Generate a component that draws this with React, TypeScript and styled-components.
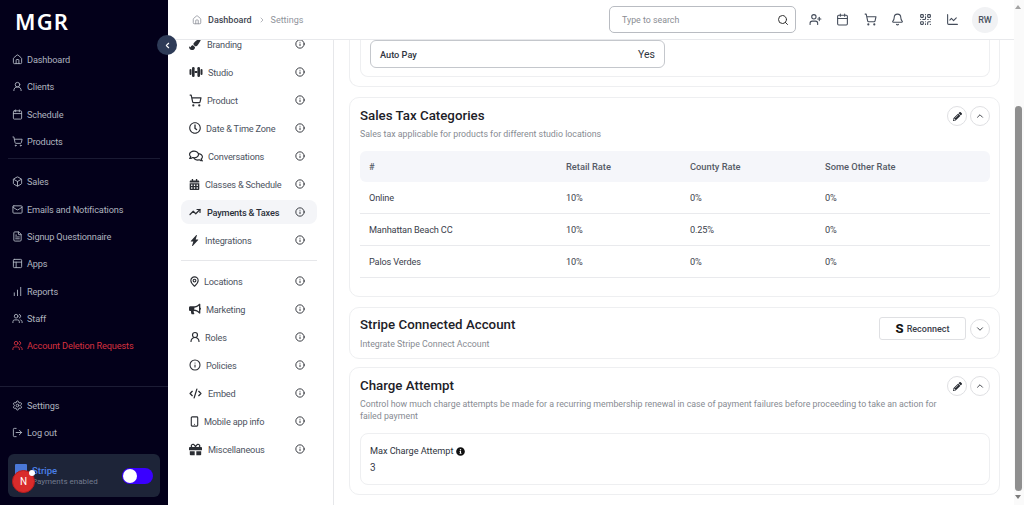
import type { ReactNode } from 'react';
import styled, { createGlobalStyle } from 'styled-components';
import {
  House, UserRound, Calendar, ShoppingCart, Box, Mail, FileText, PanelsTopLeft, Users, Settings, LogOut,
  ChevronLeft, ChevronRight, ChevronUp, ChevronDown, Search, UserPlus, Bell, QrCode, ChartLine, Info,
  TrendingUp, MapPin, CodeXml, Smartphone, ChartNoAxesColumnIncreasing,
} from 'lucide-react';
import {
  FaPaintBrush, FaCalendarAlt, FaBullhorn, FaPencilAlt, FaInfoCircle, FaGift, FaRegClock, FaRegComments,
} from 'react-icons/fa';
import { BsLightningChargeFill } from 'react-icons/bs';

const GlobalStyle = createGlobalStyle`
  html, body {
    margin: 0;
    height: 505px;
    overflow: hidden;
    font-family: Roboto, 'Noto Sans', sans-serif;
  }
  * { box-sizing: border-box; }
`;

const Shell = styled.div`
  position: relative;
  display: flex;
  width: 1024px;
  height: 505px;
  overflow: hidden;
  background: #fff;
`;

const Sidebar = styled.aside`
  width: 168px;
  flex: none;
  display: flex;
  flex-direction: column;
  background: #03001a;
  color: #b4b8c4;
`;

const Logo = styled.div`
  height: 46px;
  padding: 6px 0 0 15px;
  font-family: 'Noto Sans', sans-serif;
  font-size: 22px;
  line-height: 30px;
  font-weight: 600;
  letter-spacing: 1.2px;
  color: #fff;
`;

const SideGroup = styled.div`
  display: flex;
  flex-direction: column;
  padding: 0 8px;
`;

const SideItem = styled.div<{ $danger?: boolean }>`
  display: flex;
  align-items: center;
  gap: 4px;
  height: 27.3px;
  padding-left: 4px;
  font-size: 9.2px;
  letter-spacing: -0.15px;
  white-space: nowrap;
  color: ${({ $danger }) => ($danger ? '#d5303f' : '#aeb3bf')};
`;

const SideDivider = styled.div`
  height: 1px;
  margin: 3px 8px 9px;
  background: #1a1a33;
`;

const SideSpacer = styled.div`
  flex: 1;
`;

const SideRule = styled.div`
  height: 1px;
  margin-bottom: 4px;
  background: #1c1c35;
`;

const StripeCard = styled.div`
  display: flex;
  align-items: center;
  height: 43px;
  margin: 8px;
  padding: 0 7px;
  gap: 5px;
  border-radius: 6px;
  background: #1d2438;
`;

const StripeLogo = styled.div`
  width: 12px;
  height: 20px;
  margin-bottom: 4px;
  border-radius: 1px;
  background: #4a78d8;
`;

const StripeText = styled.div`
  flex: 1;
  font-size: 8px;
  line-height: 11px;
  color: #737b8e;

  strong {
    display: block;
    font-size: 9.5px;
    font-weight: 500;
    color: #4a7fe8;
  }
`;

const Toggle = styled.div`
  width: 31px;
  height: 16px;
  padding: 1px;
  border-radius: 8px;
  background: #3a00ff;

  &::before {
    content: '';
    display: block;
    width: 14px;
    height: 14px;
    border-radius: 50%;
    background: #fff;
  }
`;

const DevBadge = styled.div`
  position: absolute;
  left: 12px;
  top: 470px;
  width: 23px;
  height: 23px;
  display: flex;
  align-items: center;
  justify-content: center;
  border-radius: 50%;
  border: 1px solid #b81c1c;
  background: #d92b2b;
  color: #fff;
  font-size: 10px;

  &::after {
    content: '';
    position: absolute;
    right: -1px;
    top: -1px;
    width: 6px;
    height: 6px;
    border-radius: 50%;
    background: #fff;
  }
`;

const CollapseButton = styled.div`
  position: absolute;
  left: 157px;
  top: 35px;
  width: 20px;
  height: 20px;
  display: flex;
  align-items: center;
  justify-content: center;
  border-radius: 50%;
  background: #2e3b57;
  color: #fff;
`;

const Workspace = styled.div`
  flex: 1;
  min-width: 0;
  display: flex;
  flex-direction: column;
`;

const Header = styled.header`
  height: 40px;
  flex: none;
  display: flex;
  align-items: center;
  padding: 0 16px 0 24px;
  border-bottom: 1px solid #e8e9ec;
  background: #fff;
`;

const Crumbs = styled.div`
  flex: 1;
  display: flex;
  align-items: center;
  font-size: 9px;
  color: #8f939b;

  b {
    margin: 0 6px 0 6px;
    font-weight: 500;
    color: #3f4652;
  }

  span {
    margin-left: 5px;
  }
`;

const SearchBox = styled.div`
  width: 187px;
  height: 27px;
  display: flex;
  align-items: center;
  justify-content: space-between;
  padding: 0 6px 0 12px;
  border: 1px solid #b9bcc2;
  border-radius: 5px;
  font-size: 8.8px;
  color: #8a8d93;
`;

const HeaderIcons = styled.div`
  display: flex;
  align-items: center;
  gap: 14.4px;
  margin-left: 13px;
  color: #444c5a;
`;

const Avatar = styled.div`
  width: 26px;
  height: 26px;
  margin-left: 13px;
  display: flex;
  align-items: center;
  justify-content: center;
  border-radius: 50%;
  background: #f1f2f4;
  color: #4a5260;
  font-size: 9px;
  font-weight: 500;
`;

const Body = styled.div`
  flex: 1;
  min-height: 0;
  display: flex;
`;

const SettingsNav = styled.nav`
  width: 166px;
  flex: none;
  padding: 0 16px 0 13px;
  border-right: 1px solid #e6e7ea;
  overflow: hidden;
  isolation: isolate;
`;

const NavList = styled.div`
  margin-top: -10px;
`;

const NavRow = styled.div<{ $active?: boolean; $gap: number }>`
  display: flex;
  align-items: center;
  height: 28px;
  padding: 0 12px 0 8px;
  gap: ${({ $gap }) => $gap}px;
  position: relative;
  font-size: 9.2px;
  letter-spacing: -0.2px;
  white-space: nowrap;
  color: ${({ $active }) => ($active ? '#2a2f38' : '#4c5260')};
  font-weight: ${({ $active }) => ($active ? 500 : 400)};

  ${({ $active }) =>
    $active &&
    `
    &::before {
      content: '';
      position: absolute;
      inset: 2px 0;
      border-radius: 8px;
      background: #f4f5f8;
      z-index: -1;
    }
  `}

  span {
    flex: 1;
  }

  svg {
    flex: none;
    color: #2a2d33;
  }
`;

const NavDivider = styled.div`
  height: 1px;
  margin: 6px 0;
  background: #e6e7ea;
`;

const Content = styled.main`
  flex: 1;
  min-width: 0;
  display: flex;
  flex-direction: column;
  gap: 8px;
  padding: 0 14px 0 15px;
  overflow: hidden;
`;

const Card = styled.section<{ $clipped?: boolean; $spaced?: boolean }>`
  flex: none;
  padding: ${({ $clipped }) => ($clipped ? '0 9px 9px 10px' : '9px 9px 9px 10px')};
  margin-bottom: ${({ $spaced }) => ($spaced ? 2 : 0)}px;
  border: 1px solid #eeeff1;
  border-top-width: ${({ $clipped }) => ($clipped ? 0 : 1)}px;
  border-radius: ${({ $clipped }) => ($clipped ? '0 0 10px 10px' : '10px')};
`;

const TaxCard = styled(Card)`
  padding-bottom: 18px;
`;

const ConnectCard = styled(Card)`
  padding-top: 8px;
  padding-bottom: 8px;
`;

const Inner = styled.div<{ $clipped?: boolean }>`
  padding: ${({ $clipped }) => ($clipped ? '0 9px 8px' : '10px 9px 9px')};
  border: 1px solid #eeeff1;
  border-top-width: ${({ $clipped }) => ($clipped ? 0 : 1)}px;
  border-radius: ${({ $clipped }) => ($clipped ? '0 0 8px 8px' : '8px')};
`;

const FieldPanel = styled(Inner)`
  margin-top: 11px;
`;

const PayBox = styled.div`
  width: 295px;
  height: 28px;
  display: flex;
  align-items: center;
  justify-content: space-between;
  padding: 0 9px;
  border: 1px solid #c4c7cc;
  border-radius: 6px;
  font-size: 9.2px;
  font-weight: 500;
  color: #2f3540;

  em {
    font-style: normal;
    font-weight: 400;
    font-size: 10.5px;
  }
`;

const CardHead = styled.div`
  display: flex;
  align-items: flex-start;
  justify-content: space-between;
`;

const CardTitle = styled.h3`
  margin: 0;
  font-size: 13.3px;
  line-height: 18px;
  font-weight: 500;
  color: #1d2128;
`;

const CardNote = styled.p`
  margin: 3px 0 0;
  font-size: 8.8px;
  line-height: 12px;
  color: #878b92;
`;

const ConnectNote = styled(CardNote)`
  margin-top: 4px;
`;

const ChargeNote = styled(CardNote)`
  max-width: 590px;
`;

const CardActions = styled.div`
  display: flex;
  align-items: center;
  gap: 3px;
  margin: -1px 0 -1px;
`;

const ConnectActions = styled(CardActions)`
  margin-top: 1px;
`;

const RoundButton = styled.button`
  width: 20px;
  height: 20px;
  padding: 0;
  display: flex;
  align-items: center;
  justify-content: center;
  border: 1px solid #dfe0e3;
  border-radius: 50%;
  background: #fff;
  color: #23272e;
`;

const ReconnectButton = styled.button`
  width: 87px;
  height: 23px;
  margin-right: 1px;
  padding: 0;
  display: flex;
  align-items: center;
  justify-content: center;
  gap: 3px;
  border: 1px solid #dfe0e3;
  border-radius: 3px;
  background: #fff;
  font-family: inherit;
  font-size: 9px;
  font-weight: 500;
  color: #3a404a;

  b {
    font-size: 13px;
    font-weight: 800;
    color: #111;
  }
`;

const RateTable = styled.div`
  margin-top: 11px;
`;

const TableRow = styled.div<{ $head?: boolean }>`
  display: grid;
  grid-template-columns: 197px 124px 135px 1fr;
  align-items: center;
  height: ${({ $head }) => ($head ? 31 : 32)}px;
  padding: 0 9px;
  border-radius: ${({ $head }) => ($head ? '6px' : 0)};
  border-bottom: ${({ $head }) => ($head ? 'none' : '1px solid #e9eaed')};
  background: ${({ $head }) => ($head ? '#f5f6fa' : 'transparent')};
  font-size: ${({ $head }) => ($head ? 9.3 : 9.2)}px;
  letter-spacing: ${({ $head }) => ($head ? 0 : -0.15)}px;
  font-weight: ${({ $head }) => ($head ? 500 : 400)};
  color: ${({ $head }) => ($head ? '#555b66' : '#3b414c')};
`;

const FieldLabel = styled.div`
  display: flex;
  align-items: center;
  gap: 3px;
  font-size: 9.2px;
  letter-spacing: -0.05px;
  line-height: 14px;
  color: #2f3540;
`;

const FieldValue = styled.div`
  margin-top: 3px;
  font-size: 10px;
  line-height: 14px;
  color: #3b414c;
`;

const ScrollRail = styled.div`
  width: 10px;
  flex: none;
  padding-right: 2px;
  display: flex;
  flex-direction: column;
  align-items: center;
  background: #fafafa;
`;

const ScrollArrow = styled.div<{ $down?: boolean }>`
  width: 0;
  height: 0;
  margin: ${({ $down }) => ($down ? '0 0 6px' : '5px 0 0')};
  border-left: 3px solid transparent;
  border-right: 3px solid transparent;
  border-bottom: ${({ $down }) => ($down ? 'none' : '4px solid #a3a3a3')};
  border-top: ${({ $down }) => ($down ? '4px solid #7b7b7b' : 'none')};
`;

const ScrollThumb = styled.div`
  width: 7px;
  height: 385px;
  margin: 97px 0 auto;
  border-radius: 4px;
  background: #8f8f8f;
`;

function DumbbellIcon() {
  return (
    <svg width="14" height="12" viewBox="0 0 14 12" fill="currentColor">
      <rect x="0.5" y="3" width="2" height="6" rx="1" />
      <rect x="3" y="1" width="2.6" height="10" rx="1.2" />
      <rect x="5.6" y="5" width="2.8" height="2" />
      <rect x="8.4" y="1" width="2.6" height="10" rx="1.2" />
      <rect x="11.5" y="3" width="2" height="6" rx="1" />
    </svg>
  );
}

const mainNav = [
  { icon: House, label: 'Dashboard' },
  { icon: UserRound, label: 'Clients' },
  { icon: Calendar, label: 'Schedule' },
  { icon: ShoppingCart, label: 'Products' },
];

const secondNav = [
  { icon: Box, label: 'Sales' },
  { icon: Mail, label: 'Emails and Notifications' },
  { icon: FileText, label: 'Signup Questionnaire' },
  { icon: PanelsTopLeft, label: 'Apps' },
  { icon: ChartNoAxesColumnIncreasing, label: 'Reports' },
  { icon: Users, label: 'Staff' },
];

const settingsTop = [
  { icon: <FaPaintBrush size={12} />, label: 'Branding', gap: 6 },
  { icon: <DumbbellIcon />, label: 'Studio', gap: 5 },
  { icon: <ShoppingCart size={13} strokeWidth={2.2} />, label: 'Product', gap: 5 },
  { icon: <FaRegClock size={12} />, label: 'Date & Time Zone', gap: 5 },
  { icon: <FaRegComments size={14} />, label: 'Conversations', gap: 5 },
  { icon: <FaCalendarAlt size={11} />, label: 'Classes & Schedule', gap: 5 },
  { icon: <TrendingUp size={12} strokeWidth={2.4} />, label: 'Payments & Taxes', active: true, gap: 6 },
  { icon: <BsLightningChargeFill size={11} />, label: 'Integrations', gap: 5 },
];

const settingsBottom = [
  { icon: <MapPin size={11} strokeWidth={2.4} />, label: 'Locations', gap: 4 },
  { icon: <FaBullhorn size={12} />, label: 'Marketing', gap: 5 },
  { icon: <UserRound size={12} strokeWidth={2.4} />, label: 'Roles', gap: 4 },
  { icon: <Info size={12} strokeWidth={2.2} />, label: 'Policies', gap: 5 },
  { icon: <CodeXml size={13} strokeWidth={2.4} />, label: 'Embed', gap: 6 },
  { icon: <Smartphone size={11} strokeWidth={2.4} />, label: 'Mobile app info', gap: 4 },
  { icon: <FaGift size={13} />, label: 'Miscellaneous', gap: 6 },
];

const taxes = [
  ['Online', '10%', '0%', '0%'],
  ['Manhattan Beach CC', '10%', '0.25%', '0%'],
  ['Palos Verdes', '10%', '0%', '0%'],
];

function NavEntry({ icon, label, active, gap }: { icon: ReactNode; label: string; active?: boolean; gap: number }) {
  return (
    <NavRow $active={active} $gap={gap}>
      {icon}
      <span>{label}</span>
      <Info size={10} strokeWidth={2.2} />
    </NavRow>
  );
}

export default function App() {
  return (
    <Shell>
      <GlobalStyle />
      <Sidebar>
        <Logo>MGR</Logo>
        <SideGroup>
          {mainNav.map(({ icon: Icon, label }) => (
            <SideItem key={label}>
              <Icon size={11} />
              {label}
            </SideItem>
          ))}
        </SideGroup>
        <SideDivider />
        <SideGroup>
          {secondNav.map(({ icon: Icon, label }) => (
            <SideItem key={label}>
              <Icon size={11} />
              {label}
            </SideItem>
          ))}
          <SideItem $danger>
            <Users size={11} />
            Account Deletion Requests
          </SideItem>
        </SideGroup>
        <SideSpacer />
        <SideRule />
        <SideGroup>
          <SideItem>
            <Settings size={11} />
            Settings
          </SideItem>
          <SideItem>
            <LogOut size={11} />
            Log out
          </SideItem>
        </SideGroup>
        <StripeCard>
          <StripeLogo />
          <StripeText>
            <strong>Stripe</strong>
            Payments enabled
          </StripeText>
          <Toggle />
        </StripeCard>
      </Sidebar>

      <Workspace>
        <Header>
          <Crumbs>
            <House size={10} />
            <b>Dashboard</b>
            <ChevronRight size={8} />
            <span>Settings</span>
          </Crumbs>
          <SearchBox>
            Type to search
            <Search size={12} color="#333" />
          </SearchBox>
          <HeaderIcons>
            <UserPlus size={13} />
            <Calendar size={13} />
            <ShoppingCart size={13} />
            <Bell size={13} />
            <QrCode size={13} />
            <ChartLine size={13} />
          </HeaderIcons>
          <Avatar>RW</Avatar>
        </Header>
        <Body>
          <SettingsNav>
            <NavList>
              {settingsTop.map((item) => (
                <NavEntry key={item.label} {...item} />
              ))}
              <NavDivider />
              {settingsBottom.map((item) => (
                <NavEntry key={item.label} {...item} />
              ))}
            </NavList>
          </SettingsNav>
          <Content>
            <Card $clipped $spaced>
              <Inner $clipped>
                <PayBox>
                  Auto Pay
                  <em>Yes</em>
                </PayBox>
              </Inner>
            </Card>

            <TaxCard $spaced>
              <CardHead>
                <CardTitle>Sales Tax Categories</CardTitle>
                <CardActions>
                  <RoundButton><FaPencilAlt size={9} /></RoundButton>
                  <RoundButton><ChevronUp size={10} /></RoundButton>
                </CardActions>
              </CardHead>
              <CardNote>Sales tax applicable for products for different studio locations</CardNote>
              <RateTable>
                <TableRow $head>
                  <span>#</span>
                  <span>Retail Rate</span>
                  <span>County Rate</span>
                  <span>Some Other Rate</span>
                </TableRow>
                {taxes.map((row) => (
                  <TableRow key={row[0]}>
                    {row.map((cell, i) => (
                      <span key={i}>{cell}</span>
                    ))}
                  </TableRow>
                ))}
              </RateTable>
            </TaxCard>

            <ConnectCard>
              <CardHead>
                <div>
                  <CardTitle>Stripe Connected Account</CardTitle>
                  <ConnectNote>Integrate Stripe Connect Account</ConnectNote>
                </div>
                <ConnectActions>
                  <ReconnectButton><b>S</b> Reconnect</ReconnectButton>
                  <RoundButton><ChevronDown size={10} /></RoundButton>
                </ConnectActions>
              </CardHead>
            </ConnectCard>

            <Card>
              <CardHead>
                <CardTitle>Charge Attempt</CardTitle>
                <CardActions>
                  <RoundButton><FaPencilAlt size={9} /></RoundButton>
                  <RoundButton><ChevronUp size={10} /></RoundButton>
                </CardActions>
              </CardHead>
              <ChargeNote>
                Control how much charge attempts be made for a recurring membership renewal in case of payment failures before proceeding to take an action for failed payment
              </ChargeNote>
              <FieldPanel>
                <FieldLabel>Max Charge Attempt <FaInfoCircle size={9} color="#111" /></FieldLabel>
                <FieldValue>3</FieldValue>
              </FieldPanel>
            </Card>
          </Content>
        </Body>
      </Workspace>

      <ScrollRail>
        <ScrollArrow />
        <ScrollThumb />
        <ScrollArrow $down />
      </ScrollRail>

      <CollapseButton><ChevronLeft size={9} strokeWidth={3} /></CollapseButton>
      <DevBadge>N</DevBadge>
    </Shell>
  );
}
